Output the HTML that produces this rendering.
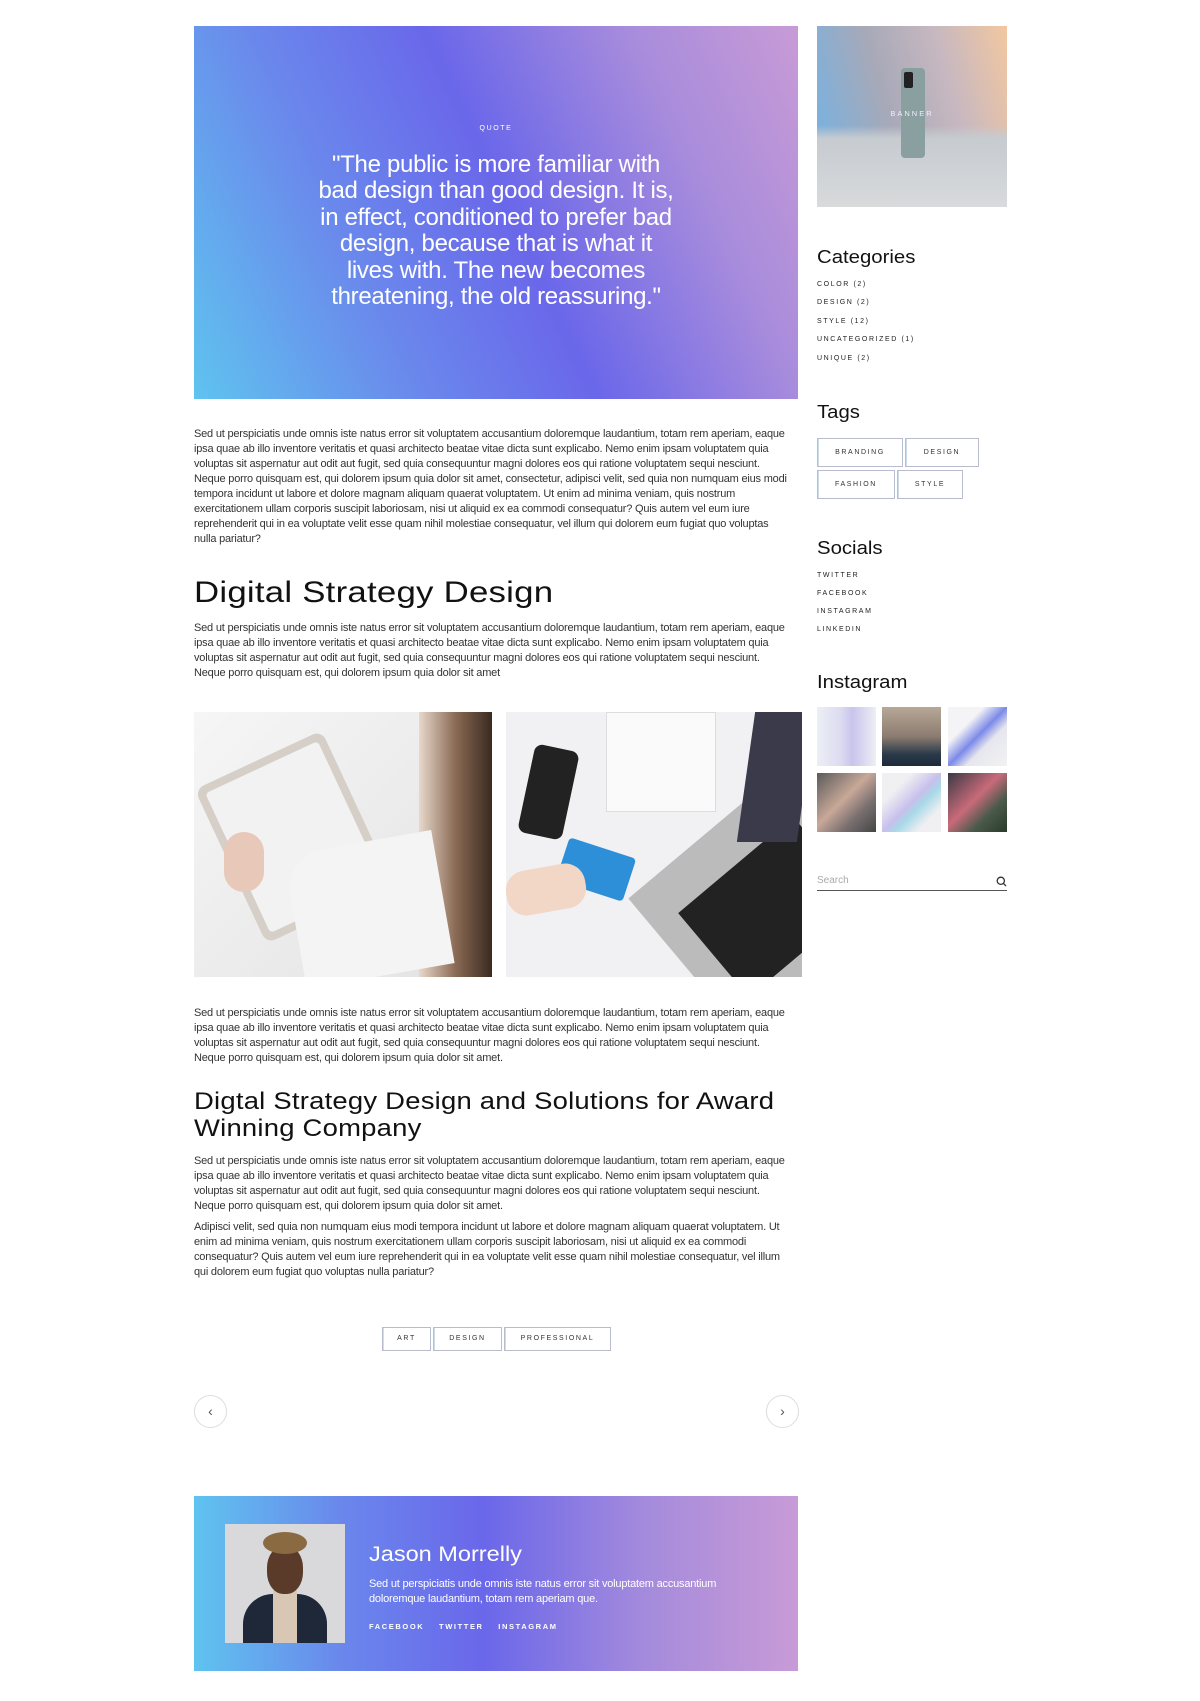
<!DOCTYPE html>
<html><head><meta charset="utf-8"><style>
*{margin:0;padding:0;box-sizing:border-box}
body{width:1200px;height:1701px;background:#fff;position:relative;font-family:"Liberation Sans",sans-serif;color:#222;overflow:hidden}
.a{position:absolute}
p.t{position:absolute;left:194px;width:620px;font-size:11px;line-height:15px;color:#333;white-space:nowrap;letter-spacing:-0.2px}
h2{position:absolute;left:194px;font-weight:400;color:#111;letter-spacing:0.2px;transform-origin:0 0;white-space:nowrap}
.sh{position:absolute;left:817px;font-size:18px;color:#111;transform:scaleX(1.13);transform-origin:0 0}
.sm{position:absolute;left:817px;font-size:7px;letter-spacing:1.6px;color:#222}
.tag{position:absolute;border:1px solid #b8bccc;font-size:7px;letter-spacing:1.6px;text-align:center;color:#333;box-shadow:inset 1px 0 0 #cde}
.ig{position:absolute;width:59px;height:59px}
.circ{position:absolute;width:33px;height:33px;border:1px solid #ddd;border-radius:50%;top:1395px;font-size:14px;color:#555;text-align:center;line-height:30px}
</style></head><body>

<div class="a" style="left:194px;top:26px;width:604px;height:373px;background:linear-gradient(65deg,#5fc3ef 0%,#6a8aec 28%,#6a67ea 52%,#a88cdc 78%,#c89bd6 100%)"></div>
<div class="a" style="left:194px;top:125px;width:604px;text-align:center;color:#fff;font-size:7px;letter-spacing:1.6px">QUOTE</div>
<div class="a" style="left:194px;top:152px;width:604px;text-align:center;color:#fff;font-size:24px;line-height:26.4px;letter-spacing:-0.3px">"The public is more familiar with<br>bad design than good design. It is,<br>in effect, conditioned to prefer bad<br>design, because that is what it<br>lives with. The new becomes<br>threatening, the old reassuring."</div>

<p class="t" style="top:427px">Sed ut perspiciatis unde omnis iste natus error sit voluptatem accusantium doloremque laudantium, totam rem aperiam, eaque<br>ipsa quae ab illo inventore veritatis et quasi architecto beatae vitae dicta sunt explicabo. Nemo enim ipsam voluptatem quia<br>voluptas sit aspernatur aut odit aut fugit, sed quia consequuntur magni dolores eos qui ratione voluptatem sequi nesciunt.<br>Neque porro quisquam est, qui dolorem ipsum quia dolor sit amet, consectetur, adipisci velit, sed quia non numquam eius modi<br>tempora incidunt ut labore et dolore magnam aliquam quaerat voluptatem. Ut enim ad minima veniam, quis nostrum<br>exercitationem ullam corporis suscipit laboriosam, nisi ut aliquid ex ea commodi consequatur? Quis autem vel eum iure<br>reprehenderit qui in ea voluptate velit esse quam nihil molestiae consequatur, vel illum qui dolorem eum fugiat quo voluptas<br>nulla pariatur?</p>

<h2 style="top:576px;font-size:30px;transform:scaleX(1.16)">Digital Strategy Design</h2>
<p class="t" style="top:621px">Sed ut perspiciatis unde omnis iste natus error sit voluptatem accusantium doloremque laudantium, totam rem aperiam, eaque<br>ipsa quae ab illo inventore veritatis et quasi architecto beatae vitae dicta sunt explicabo. Nemo enim ipsam voluptatem quia<br>voluptas sit aspernatur aut odit aut fugit, sed quia consequuntur magni dolores eos qui ratione voluptatem sequi nesciunt.<br>Neque porro quisquam est, qui dolorem ipsum quia dolor sit amet</p>

<div class="a" style="left:194px;top:712px;width:298px;height:265px;background:linear-gradient(135deg,#f6f6f6 0%,#ececec 50%,#e2e2e2 100%);overflow:hidden">
 <div class="a" style="left:30px;top:40px;width:140px;height:170px;background:#d6cfc8;border-radius:10px;transform:rotate(-25deg)"></div>
 <div class="a" style="left:38px;top:48px;width:124px;height:154px;background:#f2f2f2;border-radius:4px;transform:rotate(-25deg)"></div>
 <div class="a" style="left:225px;top:0;width:73px;height:265px;background:linear-gradient(90deg,#e8d8cc,#8a6a54 50%,#3a2a20)"></div>
 <div class="a" style="left:100px;top:130px;width:150px;height:135px;background:#f4f4f4;border-radius:40px 0 0 0;transform:rotate(-10deg)"></div>
 <div class="a" style="left:30px;top:120px;width:40px;height:60px;background:#e8c8b8;border-radius:20px"></div>
</div>
<div class="a" style="left:506px;top:712px;width:296px;height:265px;background:#f1f1f3;overflow:hidden">
 <div class="a" style="left:20px;top:35px;width:45px;height:90px;background:#222;border-radius:8px;transform:rotate(12deg)"></div>
 <div class="a" style="left:100px;top:0;width:110px;height:100px;background:#fafafa;border:1px solid #ddd"></div>
 <div class="a" style="left:160px;top:100px;width:200px;height:190px;background:#bbb;transform:rotate(-40deg)"></div>
 <div class="a" style="left:190px;top:140px;width:150px;height:110px;background:#222;transform:rotate(-40deg)"></div>
 <div class="a" style="left:240px;top:0;width:60px;height:130px;background:#3a3a4a;transform:skewX(-8deg)"></div>
 <div class="a" style="left:55px;top:135px;width:70px;height:45px;background:#2d8fd8;border-radius:4px;transform:rotate(18deg)"></div>
 <div class="a" style="left:0px;top:155px;width:80px;height:45px;background:#f2d6c6;border-radius:20px;transform:rotate(-10deg)"></div>
</div>

<p class="t" style="top:1006px">Sed ut perspiciatis unde omnis iste natus error sit voluptatem accusantium doloremque laudantium, totam rem aperiam, eaque<br>ipsa quae ab illo inventore veritatis et quasi architecto beatae vitae dicta sunt explicabo. Nemo enim ipsam voluptatem quia<br>voluptas sit aspernatur aut odit aut fugit, sed quia consequuntur magni dolores eos qui ratione voluptatem sequi nesciunt.<br>Neque porro quisquam est, qui dolorem ipsum quia dolor sit amet.</p>

<h2 style="top:1089px;font-size:24.5px;line-height:26.5px;transform:scaleX(1.12)">Digtal Strategy Design and Solutions for Award<br>Winning Company</h2>
<p class="t" style="top:1154px">Sed ut perspiciatis unde omnis iste natus error sit voluptatem accusantium doloremque laudantium, totam rem aperiam, eaque<br>ipsa quae ab illo inventore veritatis et quasi architecto beatae vitae dicta sunt explicabo. Nemo enim ipsam voluptatem quia<br>voluptas sit aspernatur aut odit aut fugit, sed quia consequuntur magni dolores eos qui ratione voluptatem sequi nesciunt.<br>Neque porro quisquam est, qui dolorem ipsum quia dolor sit amet.</p>
<p class="t" style="top:1220px">Adipisci velit, sed quia non numquam eius modi tempora incidunt ut labore et dolore magnam aliquam quaerat voluptatem. Ut<br>enim ad minima veniam, quis nostrum exercitationem ullam corporis suscipit laboriosam, nisi ut aliquid ex ea commodi<br>consequatur? Quis autem vel eum iure reprehenderit qui in ea voluptate velit esse quam nihil molestiae consequatur, vel illum<br>qui dolorem eum fugiat quo voluptas nulla pariatur?</p>

<div class="tag" style="left:382px;top:1327px;width:49px;height:24px;line-height:22px">ART</div>
<div class="tag" style="left:433px;top:1327px;width:69px;height:24px;line-height:22px">DESIGN</div>
<div class="tag" style="left:504px;top:1327px;width:107px;height:24px;line-height:22px">PROFESSIONAL</div>

<div class="circ" style="left:194px">&#8249;</div>
<div class="circ" style="left:766px">&#8250;</div>

<div class="a" style="left:194px;top:1496px;width:604px;height:175px;background:linear-gradient(90deg,#5fc3ef 0%,#6a86ec 25%,#6a67ea 48%,#a58bdc 75%,#c89bd6 100%)"></div>
<div class="a" style="left:225px;top:1524px;width:120px;height:119px;background:#d9d9dc;overflow:hidden">
 <div class="a" style="left:18px;top:70px;width:84px;height:60px;background:#1f2838;border-radius:30px 30px 0 0"></div>
 <div class="a" style="left:48px;top:66px;width:24px;height:60px;background:#d8c7b5"></div>
 <div class="a" style="left:42px;top:22px;width:36px;height:48px;background:#5a3a28;border-radius:45%"></div>
 <div class="a" style="left:38px;top:8px;width:44px;height:22px;background:#8a6a40;border-radius:50%"></div>
</div>
<div class="a" style="left:369px;top:1543px;color:#fff;font-size:21px;transform:scaleX(1.12);transform-origin:0 0">Jason Morrelly</div>
<div class="a" style="left:369px;top:1577px;color:#fff;font-size:11px;line-height:15px;letter-spacing:-0.2px">Sed ut perspiciatis unde omnis iste natus error sit voluptatem accusantium<br>doloremque laudantium, totam rem aperiam que.</div>
<div class="a" style="left:369px;top:1622px;color:#fff;font-size:7.5px;letter-spacing:1.6px;font-weight:bold">FACEBOOK&nbsp;&nbsp;&nbsp;&nbsp;TWITTER&nbsp;&nbsp;&nbsp;&nbsp;INSTAGRAM</div>

<!-- sidebar -->
<div class="a" style="left:817px;top:26px;width:190px;height:181px;background:linear-gradient(180deg,rgba(0,0,0,0) 55%,#c6cbd0 62%,#d8dadc 100%),linear-gradient(75deg,#6fb3e8 0%,#a7a9b8 40%,#c8b8c0 70%,#f2c7a0 100%)">
 <div class="a" style="left:84px;top:42px;width:24px;height:90px;background:#8aa0a0;border-radius:4px"></div>
 <div class="a" style="left:87px;top:46px;width:9px;height:16px;background:#222;border-radius:2px"></div>
 <div class="a" style="left:0;top:83px;width:190px;text-align:center;color:#eef;font-size:7.5px;letter-spacing:2px">BANNER</div>
</div>

<div class="sh" style="top:247px">Categories</div>
<div class="sm" style="top:281px">COLOR (2)</div>
<div class="sm" style="top:299px">DESIGN (2)</div>
<div class="sm" style="top:318px">STYLE (12)</div>
<div class="sm" style="top:336px">UNCATEGORIZED (1)</div>
<div class="sm" style="top:355px">UNIQUE (2)</div>

<div class="sh" style="top:402px">Tags</div>
<div class="tag" style="left:817px;top:438px;width:86px;height:29px;line-height:27px">BRANDING</div>
<div class="tag" style="left:905px;top:438px;width:74px;height:29px;line-height:27px">DESIGN</div>
<div class="tag" style="left:817px;top:470px;width:78px;height:29px;line-height:27px">FASHION</div>
<div class="tag" style="left:897px;top:470px;width:66px;height:29px;line-height:27px">STYLE</div>

<div class="sh" style="top:538px">Socials</div>
<div class="sm" style="top:572px">TWITTER</div>
<div class="sm" style="top:590px">FACEBOOK</div>
<div class="sm" style="top:608px">INSTAGRAM</div>
<div class="sm" style="top:626px">LINKEDIN</div>

<div class="sh" style="top:672px">Instagram</div>
<div class="ig" style="left:817px;top:707px;background:linear-gradient(90deg,#eceef6,#dcdcf0 40%,#c8c4ec 60%,#eeeef4)"></div>
<div class="ig" style="left:882px;top:707px;background:linear-gradient(180deg,#b8a898 0%,#8c7c70 50%,#2a3a4a 80%,#1e2a3a)"></div>
<div class="ig" style="left:948px;top:707px;background:linear-gradient(135deg,#f4f4f6 30%,#7c8ae8 50%,#e6e6ee 65%,#f2f2f4)"></div>
<div class="ig" style="left:817px;top:773px;background:linear-gradient(135deg,#5a5a5a,#c8a898 45%,#7a7070 70%,#444)"></div>
<div class="ig" style="left:882px;top:773px;background:linear-gradient(135deg,#f0f0f2 25%,#c8c0ec 50%,#a8d8e8 60%,#f0f0f2 80%)"></div>
<div class="ig" style="left:948px;top:773px;background:linear-gradient(135deg,#3a3a44,#c86a7a 45%,#4a5a4a 70%,#2a3a2a)"></div>

<div class="a" style="left:817px;top:875px;font-size:10px;color:#aaa">Search</div>
<svg class="a" style="left:996px;top:876px" width="11" height="11" viewBox="0 0 11 11"><circle cx="4.8" cy="4.8" r="3.6" fill="none" stroke="#333" stroke-width="1.3"/><path d="M7.4 7.4L10 10" stroke="#333" stroke-width="1.3"/></svg>
<div class="a" style="left:817px;top:890px;width:190px;height:1px;background:#555"></div>
</body></html>
